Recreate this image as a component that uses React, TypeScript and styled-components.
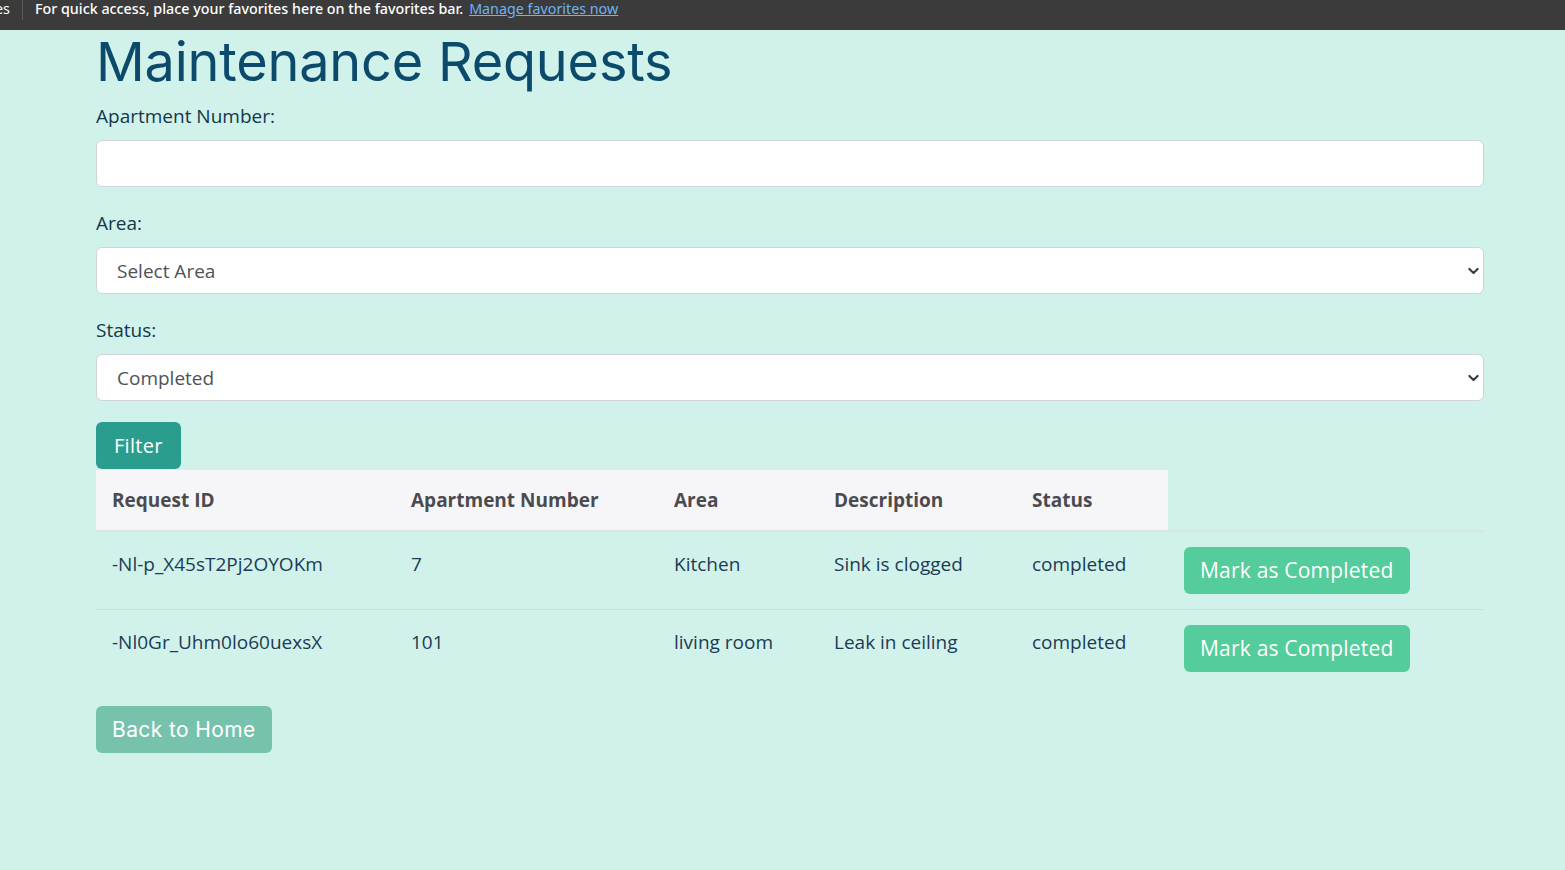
import React from "react";
import styled, { createGlobalStyle } from "styled-components";

const GlobalStyle = createGlobalStyle`
  html, body {
    margin: 0;
    padding: 0;
    background: #d1f2eb;
  }
  body {
    font-family: "Open Sans", "Noto Sans", sans-serif;
  }
  * {
    box-sizing: border-box;
  }
`;

interface RequestRow {
  id: string;
  apartment: string;
  area: string;
  description: string;
  status: string;
}

const rows: RequestRow[] = [
  {
    id: "-Nl-p_X45sT2Pj2OYOKm",
    apartment: "7",
    area: "Kitchen",
    description: "Sink is clogged",
    status: "completed",
  },
  {
    id: "-Nl0Gr_Uhm0lo60uexsX",
    apartment: "101",
    area: "living room",
    description: "Leak in ceiling",
    status: "completed",
  },
];

function Chevron() {
  return (
    <svg width="11" height="11" viewBox="0 0 16 16">
      <path
        d="M2 5l6 6 6-6"
        fill="none"
        stroke="#343a40"
        strokeWidth="3"
        strokeLinecap="round"
        strokeLinejoin="round"
      />
    </svg>
  );
}

function App() {
  return (
    <Page>
      <GlobalStyle />
      <FavBar>
        <span className="cut">es</span>
        <span className="sep" />
        <span className="msg">
          For quick access, place your favorites here on the favorites bar.
        </span>
        <a className="link">Manage favorites now</a>
      </FavBar>

      <Container>
        <Title>Maintenance Requests</Title>

        <Field>
          <Label>Apartment Number:</Label>
          <Input type="text" />
        </Field>

        <Field>
          <Label>Area:</Label>
          <SelectWrap>
            <Select defaultValue="">
              <option value="">Select Area</option>
              <option value="kitchen">Kitchen</option>
              <option value="living room">living room</option>
            </Select>
            <Arrow>
              <Chevron />
            </Arrow>
          </SelectWrap>
        </Field>

        <Field>
          <Label>Status:</Label>
          <SelectWrap>
            <Select defaultValue="completed">
              <option value="pending">Pending</option>
              <option value="completed">Completed</option>
            </Select>
            <Arrow>
              <Chevron />
            </Arrow>
          </SelectWrap>
        </Field>

        <Button $variant="filter">Filter</Button>

        <Table>
          <thead>
            <tr>
              <Th>Request ID</Th>
              <Th>Apartment Number</Th>
              <Th>Area</Th>
              <Th>Description</Th>
              <Th>Status</Th>
              <Th $empty />
            </tr>
          </thead>
          <tbody>
            {rows.map((r) => (
              <tr key={r.id}>
                <Td>{r.id}</Td>
                <Td>{r.apartment}</Td>
                <Td>{r.area}</Td>
                <Td>{r.description}</Td>
                <Td>{r.status}</Td>
                <Td $action>
                  <Button $variant="mark">Mark as Completed</Button>
                </Td>
              </tr>
            ))}
          </tbody>
        </Table>

        <Button $variant="back">Back to Home</Button>
      </Container>
    </Page>
  );
}

const Page = styled.div`
  min-height: 870px;
  background: #d1f2eb;
`;

const FavBar = styled.div`
  height: 30px;
  background: #3b3b3b;
  display: flex;
  align-items: flex-start;
  padding-top: 1px;
  font-family: "Noto Sans", "Open Sans", sans-serif;
  font-size: 14.3px;
  color: #ffffff;
  white-space: nowrap;
  overflow: hidden;
  line-height: 16px;

  .cut {
    margin-left: -5px;
  }
  .sep {
    width: 1px;
    height: 22px;
    background: #5a5a5a;
    margin: -3px 12px 0 12px;
  }
  .msg {
    font-weight: 500;
  }
  .link {
    margin-left: 6px;
    color: #6db3f2;
    text-decoration: underline;
  }
`;

const Container = styled.div`
  width: 1388px;
  margin-left: 96px;
  display: flex;
  flex-direction: column;
  align-items: flex-start;
`;

const Title = styled.h1`
  margin: 2px 0 9px;
  font-family: "Inter", "Lato", sans-serif;
  font-weight: 400;
  font-size: 54px;
  line-height: 60px;
  color: #0b4a6b;
  letter-spacing: -0.2px;
`;

const Field = styled.div`
  width: 100%;
  display: flex;
  flex-direction: column;
  margin-bottom: 21px;
`;

const Label = styled.label`
  font-size: 19px;
  line-height: 24px;
  color: #11384b;
  margin: 3px 0 12px;
`;

const Input = styled.input`
  width: 100%;
  height: 47px;
  background: #ffffff;
  border: 1px solid #ced4da;
  border-radius: 6px;
  padding: 0 20px;
  font-family: inherit;
  font-size: 19px;
  outline: none;
`;

const SelectWrap = styled.div`
  position: relative;
  width: 100%;
`;

const Select = styled.select`
  width: 100%;
  height: 47px;
  appearance: none;
  background: #ffffff;
  border: 1px solid #ced4da;
  border-radius: 6px;
  padding: 0 40px 0 20px;
  font-family: inherit;
  font-size: 19px;
  color: #4f5257;
  outline: none;
`;

const Arrow = styled.span`
  position: absolute;
  right: 5px;
  top: 50%;
  transform: translateY(-50%);
  display: flex;
  pointer-events: none;
`;

const variants = {
  filter: { bg: "#2a9d8f", font: `"Open Sans", sans-serif`, size: "20px", pad: "18px", ls: "0.3px" },
  mark: { bg: "#55cc9b", font: `"Open Sans", sans-serif`, size: "21px", pad: "16px", ls: "0.2px" },
  back: { bg: "#77c2ad", font: `"Inter", sans-serif`, size: "21px", pad: "16px", ls: "0.4px" },
};

const Button = styled.button<{ $variant: keyof typeof variants }>`
  height: 47px;
  padding: 0 ${(p) => variants[p.$variant].pad};
  border: none;
  border-radius: 6px;
  background: ${(p) => variants[p.$variant].bg};
  color: #ffffff;
  font-family: ${(p) => variants[p.$variant].font};
  font-size: ${(p) => variants[p.$variant].size};
  letter-spacing: ${(p) => variants[p.$variant].ls};
  cursor: pointer;
  margin-top: ${(p) => (p.$variant === "back" ? "19px" : "0")};
`;

const Table = styled.table`
  width: 100%;
  margin-top: 1px;
  border-collapse: collapse;
  font-size: 19px;
  table-layout: fixed;

  th:nth-child(1) { width: 299px; }
  th:nth-child(2) { width: 263px; }
  th:nth-child(3) { width: 160px; }
  th:nth-child(4) { width: 198px; }
  th:nth-child(5) { width: 152px; }
`;

const Th = styled.th<{ $empty?: boolean }>`
  height: 61px;
  padding: 0 16px;
  text-align: left;
  font-weight: 700;
  color: #4b4b4f;
  background: ${(p) => (p.$empty ? "transparent" : "#f6f6f8")};
  border-bottom: 2px solid #dde5e3;
`;

const Td = styled.td<{ $action?: boolean }>`
  height: 78px;
  padding: ${(p) => (p.$action ? "0 16px 0" : "0 16px 12px")};
  color: #1c3b55;
  border-bottom: 1px solid #bfe3da;
  vertical-align: middle;

  tr:last-child & {
    border-bottom: none;
  }
`;

export default App;
